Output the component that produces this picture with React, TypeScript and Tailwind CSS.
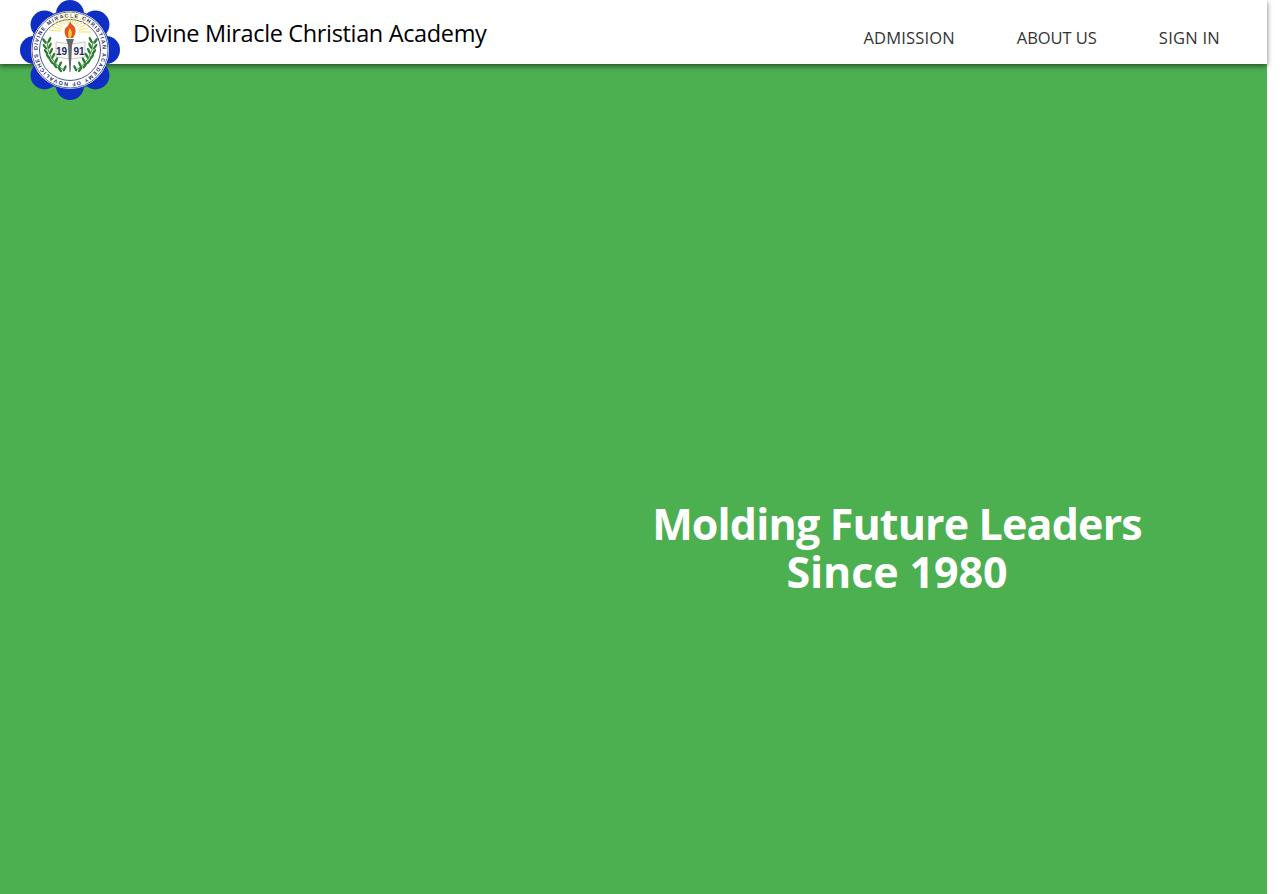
const petals = Array.from({ length: 8 }, (_, i) => {
  const a = (i * Math.PI) / 4 - Math.PI / 2;
  return { cx: 50 + 36 * Math.cos(a), cy: 50 + 36 * Math.sin(a) };
});

// one laurel branch, the other side is mirrored
function Leaves({ flip }: { flip?: boolean }) {
  const leaves = [0, 1, 2, 3, 4, 5, 6];
  return (
    <g transform={flip ? "translate(100 0) scale(-1 1)" : undefined}>
      <path d="M27 41 Q27 60 45 71" fill="none" stroke="#1f6b2a" strokeWidth="0.8" />
      {leaves.map((i) => {
        const t = i / 6.5;
        const x = (1 - t) * (1 - t) * 27 + 2 * t * (1 - t) * 27 + t * t * 45;
        const y = (1 - t) * (1 - t) * 41 + 2 * t * (1 - t) * 60 + t * t * 71;
        return (
          <g key={i}>
            <ellipse cx={x - 2.6} cy={y} rx="3.4" ry="1.25" fill="#2a7d2e" transform={`rotate(55 ${x - 2.6} ${y})`} />
            <ellipse cx={x + 2.4} cy={y - 1} rx="3.4" ry="1.25" fill="#2a7d2e" transform={`rotate(-65 ${x + 2.4} ${y - 1})`} />
          </g>
        );
      })}
    </g>
  );
}

function Logo() {
  return (
    <svg viewBox="0 0 100 100" className="h-full w-full">
      {petals.map((p, i) => (
        <circle key={i} cx={p.cx} cy={p.cy} r="14" fill="#0f2fc4" />
      ))}
      <circle cx="50" cy="50" r="40" fill="#0f2fc4" />
      <circle cx="50" cy="50" r="39" fill="#fff" />
      <circle cx="50" cy="50" r="38" fill="none" stroke="#1d2a6b" strokeWidth="0.7" />
      <circle cx="50" cy="50" r="30.5" fill="#fff" stroke="#1d2a6b" strokeWidth="0.8" />
      <defs>
        <path id="seal-ring" d="M50 50 m-32.5 0 a32.5 32.5 0 1 1 65 0 a32.5 32.5 0 1 1 -65 0" />
      </defs>
      <text fontSize="5.4" fontWeight="700" fill="#1d2a6b" fontFamily="'Liberation Sans', sans-serif" textLength="200">
        <textPath href="#seal-ring">DIVINE MIRACLE CHRISTIAN ACADEMY OF NOVALICHES</textPath>
      </text>
      {Array.from({ length: 15 }, (_, i) => {
        const a = (-175 + i * 12.5) * (Math.PI / 180);
        return (
          <line
            key={i}
            x1={50 + 9 * Math.cos(a)}
            y1={32 + 9 * Math.sin(a)}
            x2={50 + 21 * Math.cos(a)}
            y2={32 + 21 * Math.sin(a)}
            stroke="#f5e04a"
            strokeWidth="0.9"
          />
        );
      })}
      <path d="M36 42 L49 44 L49 59 L36 57 Z M65 42 L51 44 L51 59 L65 57 Z" fill="#fbfaf5" stroke="#a9a69a" strokeWidth="0.6" />
      <path d="M50 21 C51 25 55 25 55.5 30 C56 34 54 36 53 38 L47 38 C45 35 44 33 45 29 C46 27 49 26 50 21 Z" fill="#e2571c" />
      <path d="M50 28 C52 31 52.5 35 50.5 38 L49 38 C47.5 35 48 31 50 28 Z" fill="#fbd24a" />
      <path d="M46 39 H54 L52 45 L50.5 72 H49.5 L48 45 Z" fill="#63666b" />
      <text x="41.5" y="55" fontSize="10" fontWeight="700" fill="#1d2a6b" textAnchor="middle" fontFamily="'Liberation Sans', sans-serif">19</text>
      <text x="59" y="55" fontSize="10" fontWeight="700" fill="#1d2a6b" textAnchor="middle" fontFamily="'Liberation Sans', sans-serif">91</text>
      <Leaves />
      <Leaves flip />
    </svg>
  );
}

export default function App() {
  return (
    <div className="min-h-[894px] w-[1267px] bg-[#4CAF50] font-['Open_Sans','Noto_Sans',sans-serif]">
      <header className="relative flex h-16 items-start justify-between bg-white pl-[133px] pr-[47px] shadow-[0_2px_5px_rgba(0,0,0,0.55)]">
        <div className="absolute left-5 top-0 h-[100px] w-[100px]">
          <Logo />
        </div>
        <h1 className="pt-[16px] text-[23.5px] leading-[34px] tracking-[-0.35px] text-black">Divine Miracle Christian Academy</h1>
        <nav className="flex gap-[62px] pt-[26px] text-[16.5px] leading-6 text-[#333]">
          <a className="tracking-[0.17px]">ADMISSION</a>
          <a className="tracking-[-0.05px]">ABOUT US</a>
          <a className="tracking-[0.25px]">SIGN IN</a>
        </nav>
      </header>
      <main className="pl-[527px] pt-[436px]">
        <h2 className="text-center text-[43px] leading-[48px] font-bold text-white">
          <span className="block tracking-[-0.85px]">Molding Future Leaders</span>
          <span className="block tracking-[-0.1px]">Since 1980</span>
        </h2>
      </main>
    </div>
  );
}
